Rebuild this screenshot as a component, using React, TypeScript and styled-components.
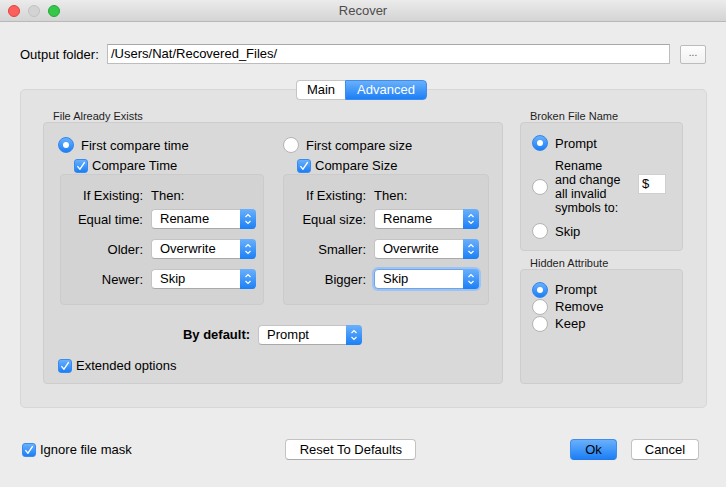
import React from 'react';
import styled, { createGlobalStyle, css } from 'styled-components';

const GlobalStyle = createGlobalStyle`
	html, body {
		margin: 0;
		padding: 0;
	}
	body {
		font-family: "Liberation Sans", Arial, sans-serif;
		font-size: 13px;
		color: #000;
		background: #ececec;
	}
`;

const blueFill = css`
	background: linear-gradient(#6ab0fb, #1b7ff6);
`;

// ---------- small controls ----------

const RadioDot = styled.span<{ $checked?: boolean }>`
	box-sizing: border-box;
	flex: none;
	width: 16px;
	height: 16px;
	border-radius: 50%;
	display: flex;
	align-items: center;
	justify-content: center;
	${(p) =>
		p.$checked
			? css`
					${blueFill};
					border: 1px solid #2f86ee;
					&::after {
						content: '';
						width: 6px;
						height: 6px;
						border-radius: 50%;
						background: #fff;
					}
			  `
			: css`
					background: #fff;
					border: 1px solid #b4b4b4;
			  `}
`;

const CheckBox = styled.span`
	box-sizing: border-box;
	flex: none;
	width: 14px;
	height: 14px;
	border-radius: 3px;
	${blueFill};
	border: 1px solid #3a8bef;
	display: flex;
	align-items: center;
	justify-content: center;
`;

const Check = () => (
	<CheckBox>
		<svg width="12" height="12" viewBox="0 0 12 12">
			<polyline
				points="2.8,6.6 5,9.2 9.4,2.6"
				fill="none"
				stroke="#fff"
				strokeWidth="1.4"
				strokeLinecap="round"
				strokeLinejoin="round"
			/>
		</svg>
	</CheckBox>
);

const SelectBox = styled.div<{ $width: number; $focused?: boolean }>`
	box-sizing: border-box;
	width: ${(p) => p.$width}px;
	height: 20px;
	display: flex;
	background: #fff;
	border: 1px solid #c4c4c4;
	border-bottom-color: #a9a9a9;
	border-radius: 4px;
	${(p) =>
		p.$focused &&
		css`
			border-color: #6fa3e6;
			box-shadow: 0 0 0 2px #9cc3f2;
		`}
`;

const SelectText = styled.span`
	flex: 1;
	padding-left: 8px;
	line-height: 18px;
`;

const SelectArrow = styled.span`
	width: 16px;
	margin: -1px -1px -1px 0;
	border-radius: 0 4px 4px 0;
	${blueFill};
	display: flex;
	align-items: center;
	justify-content: center;
`;

const Select = ({
	value,
	width = 105,
	focused,
}: {
	value: string;
	width?: number;
	focused?: boolean;
}) => (
	<SelectBox $width={width} $focused={focused}>
		<SelectText>{value}</SelectText>
		<SelectArrow>
			<svg width="10" height="14" viewBox="0 0 10 14">
				<polyline points="2.5,5 5,2.5 7.5,5" fill="none" stroke="#fff" strokeWidth="1.2" />
				<polyline points="2.5,9 5,11.5 7.5,9" fill="none" stroke="#fff" strokeWidth="1.2" />
			</svg>
		</SelectArrow>
	</SelectBox>
);

const PushButton = styled.button<{ $width: number; $primary?: boolean }>`
	box-sizing: border-box;
	width: ${(p) => p.$width}px;
	height: 21px;
	padding: 0;
	font-family: inherit;
	font-size: 13px;
	color: #000;
	border-radius: 4px;
	border: 1px solid #c3c3c3;
	border-bottom-color: #aaaaaa;
	background: #fff;
	${(p) =>
		p.$primary &&
		css`
			${blueFill};
			border-color: #3d8cee;
			border-bottom-color: #2a77de;
		`}
`;

// ---------- window chrome ----------

const Window = styled.div`
	width: 726px;
	height: 487px;
	background: #ececec;
	display: flex;
	flex-direction: column;
	overflow: hidden;
`;

const TitleBar = styled.div`
	box-sizing: border-box;
	height: 22px;
	display: grid;
	grid-template-columns: 1fr auto 1fr;
	align-items: center;
	background: linear-gradient(#ebebeb, #d4d4d4);
	border-bottom: 1px solid #b8b8b8;
`;

const Lights = styled.div`
	display: flex;
	gap: 8px;
	padding-left: 8px;
`;

const Light = styled.span<{ $color: string; $edge: string }>`
	box-sizing: border-box;
	width: 12px;
	height: 12px;
	border-radius: 50%;
	background: ${(p) => p.$color};
	border: 1px solid ${(p) => p.$edge};
`;

const Title = styled.div`
	color: #4d4d4d;
	font-size: 13px;
`;

const Body = styled.div`
	flex: 1;
	display: flex;
	flex-direction: column;
	padding: 22px 19px 0 20px;
`;

// ---------- output folder ----------

const FolderRow = styled.div`
	display: flex;
	align-items: center;
	height: 20px;
`;

const FolderLabel = styled.label`
	width: 87px;
	flex: none;
`;

const PathField = styled.div`
	box-sizing: border-box;
	flex: 1;
	height: 20px;
	background: #fff;
	border: 1px solid #bdbdbd;
	border-top-color: #a8a8a8;
	padding-left: 3px;
	line-height: 18px;
`;

const BrowseButton = styled.button`
	box-sizing: border-box;
	width: 26px;
	height: 19px;
	margin: 0 1px 0 10px;
	padding: 0 0 4px;
	font-size: 10px;
	color: #555;
	background: linear-gradient(#fdfdfd, #f1f1f1);
	border: 1px solid #bcbcbc;
	border-radius: 2px;
`;

// ---------- tabs + panel ----------

const TabBar = styled.div`
	margin-top: 16px;
	display: flex;
	justify-content: center;
	position: relative;
	z-index: 1;
	padding-right: 4px;
`;

const Tab = styled.div<{ $active?: boolean; $width: number }>`
	box-sizing: border-box;
	width: ${(p) => p.$width}px;
	height: 20px;
	line-height: 18px;
	text-align: center;
	font-size: 13px;
	border: 1px solid #c5c5c5;
	background: #fff;
	&:first-child {
		border-radius: 4px 0 0 4px;
		border-right: none;
	}
	&:last-child {
		border-radius: 0 4px 4px 0;
	}
	${(p) =>
		p.$active &&
		css`
			${blueFill};
			border-color: #3d8cee;
			color: #fff;
		`}
`;

const Panel = styled.div`
	margin-top: -11px;
	background: #e3e3e3;
	border: 1px solid #d7d7d7;
	border-radius: 5px;
	padding: 20px 23px 23px 22px;
	display: grid;
	grid-template-columns: 460px 163px;
	column-gap: 17px;
`;

const Column = styled.div`
	display: flex;
	flex-direction: column;
`;

const Legend = styled.div<{ $gap?: number }>`
	font-size: 11px;
	line-height: 12px;
	height: 12px;
	padding-left: 10px;
	color: #1e1e1e;
	margin-top: ${(p) => p.$gap || 0}px;
`;

const GroupBox = styled.div<{ $grow?: boolean }>`
	background: #d9d9d9;
	border: 1px solid #cdcdcd;
	border-radius: 4px;
	display: flex;
	flex-direction: column;
	${(p) => p.$grow && 'flex: 1;'}
`;

const FileBox = styled(GroupBox)`
	padding: 13px 15px 9px 14px;
`;

const SideBox = styled(GroupBox)`
	padding: 11px 11px 9px;
`;

// ---------- compare columns ----------

const CompareColumns = styled.div`
	display: grid;
	grid-template-columns: 208px 208px;
	column-gap: 17px;
`;

const Option = styled.div<{ $height?: number }>`
	display: flex;
	align-items: center;
	gap: 7px;
	height: ${(p) => p.$height || 18}px;
`;

const CheckRow = styled.div<{ $indent?: number; $top?: number }>`
	display: flex;
	align-items: center;
	gap: 4px;
	height: 17px;
	margin-left: ${(p) => p.$indent || 0}px;
	margin-top: ${(p) => p.$top || 0}px;
`;

const RulesBox = styled.div<{ $inset: number }>`
	margin-left: ${(p) => p.$inset}px;
	width: ${(p) => 206 - p.$inset}px;
	box-sizing: border-box;
	background: #d3d3d3;
	border: 1px solid #cbcbcb;
	border-radius: 4px;
	padding: 13px 0 15px;
	display: flex;
	flex-direction: column;
	gap: 10px;
`;

const RuleRow = styled.div<{ $header?: boolean }>`
	display: flex;
	align-items: center;
	gap: 8px;
	height: ${(p) => (p.$header ? 14 : 20)}px;
	${(p) => p.$header && 'margin-bottom: -3px;'}
`;

const RuleLabel = styled.span`
	width: 82px;
	text-align: right;
`;

const DefaultRow = styled.div`
	margin-top: 19px;
	height: 21px;
	display: flex;
	justify-content: center;
	align-items: center;
	gap: 8px;
`;

const BoldLabel = styled.span`
	font-weight: bold;
`;

// ---------- side groups ----------

const BrokenBox = styled(SideBox)`
	padding-bottom: 10px;
`;

const RenameOption = styled(Option)`
	margin-top: 7px;
	height: 56px;
`;

const RenameText = styled.span`
	width: 76px;
	font-size: 12.5px;
	line-height: 14px;
`;

const SymbolField = styled.div`
	box-sizing: border-box;
	width: 28px;
	height: 20px;
	background: #fff;
	border: 1px solid #cfcfcf;
	padding-left: 3px;
	line-height: 18px;
	margin-bottom: 6px;
`;

const SkipOption = styled(Option)`
	margin-top: 7px;
`;

// ---------- footer ----------

const Footer = styled.div`
	margin-top: 31px;
	display: flex;
	align-items: center;
	padding: 0 8px 0 2px;
`;

const FooterCheck = styled(CheckRow)`
	height: 20px;
`;

const CenterButton = styled(PushButton)`
	margin: 0 auto;
`;

const CancelButton = styled(PushButton)`
	margin-left: 14px;
`;

type Rule = [string, string, boolean?];

const RulesTable = ({ rules, inset }: { rules: Rule[]; inset: number }) => (
	<RulesBox $inset={inset}>
		<RuleRow $header>
			<RuleLabel>If Existing:</RuleLabel>
			<span>Then:</span>
		</RuleRow>
		{rules.map(([label, value, focused]) => (
			<RuleRow key={label}>
				<RuleLabel>{label}</RuleLabel>
				<Select value={value} focused={focused} />
			</RuleRow>
		))}
	</RulesBox>
);

export default function App() {
	return (
		<Window>
			<GlobalStyle />
			<TitleBar>
				<Lights>
					<Light $color="#fc605c" $edge="#e0443e" />
					<Light $color="#d3d3d3" $edge="#c2c2c2" />
					<Light $color="#34c84a" $edge="#24a837" />
				</Lights>
				<Title>Recover</Title>
				<span />
			</TitleBar>
			<Body>
				<FolderRow>
					<FolderLabel>Output folder:</FolderLabel>
					<PathField>/Users/Nat/Recovered_Files/</PathField>
					<BrowseButton>...</BrowseButton>
				</FolderRow>

				<TabBar>
					<Tab $width={49}>Main</Tab>
					<Tab $width={82} $active>
						Advanced
					</Tab>
				</TabBar>

				<Panel>
					<Column>
						<Legend>File Already Exists</Legend>
						<FileBox>
							<CompareColumns>
								<Column>
									<Option>
										<RadioDot $checked />
										First compare time
									</Option>
									<CheckRow $indent={16} $top={3}>
										<Check />
										Compare Time
									</CheckRow>
									<RulesTable
										inset={2}
										rules={[
											['Equal time:', 'Rename'],
											['Older:', 'Overwrite'],
											['Newer:', 'Skip'],
										]}
									/>
								</Column>
								<Column>
									<Option>
										<RadioDot />
										First compare size
									</Option>
									<CheckRow $indent={14} $top={3}>
										<Check />
										Compare Size
									</CheckRow>
									<RulesTable
										inset={0}
										rules={[
											['Equal size:', 'Rename'],
											['Smaller:', 'Overwrite'],
											['Bigger:', 'Skip', true],
										]}
									/>
								</Column>
							</CompareColumns>
							<DefaultRow>
								<BoldLabel>By default:</BoldLabel>
								<Select value="Prompt" width={104} />
							</DefaultRow>
							<CheckRow $top={12}>
								<Check />
								Extended options
							</CheckRow>
						</FileBox>
					</Column>

					<Column>
						<Legend>Broken File Name</Legend>
						<BrokenBox>
							<Option>
								<RadioDot $checked />
								Prompt
							</Option>
							<RenameOption>
								<RadioDot />
								<RenameText>
									Rename
									<br />
									and change
									<br />
									all invalid
									<br />
									symbols to:
								</RenameText>
								<SymbolField>$</SymbolField>
							</RenameOption>
							<SkipOption>
								<RadioDot />
								Skip
							</SkipOption>
						</BrokenBox>
						<Legend $gap={6}>Hidden Attribute</Legend>
						<SideBox $grow>
							<Option $height={17}>
								<RadioDot $checked />
								Prompt
							</Option>
							<Option $height={17}>
								<RadioDot />
								Remove
							</Option>
							<Option $height={17}>
								<RadioDot />
								Keep
							</Option>
						</SideBox>
					</Column>
				</Panel>

				<Footer>
					<FooterCheck>
						<Check />
						Ignore file mask
					</FooterCheck>
					<CenterButton $width={131}>Reset To Defaults</CenterButton>
					<PushButton $width={47} $primary>
						Ok
					</PushButton>
					<CancelButton $width={68}>Cancel</CancelButton>
				</Footer>
			</Body>
		</Window>
	);
}
